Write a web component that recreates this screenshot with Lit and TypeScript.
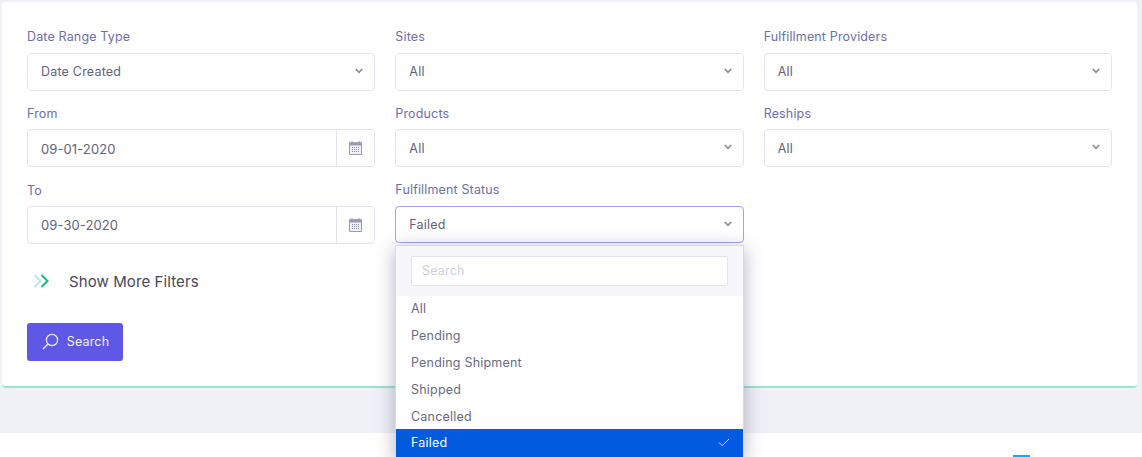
import { LitElement, html, css, svg } from "lit";
import { customElement } from "lit/decorators.js";

const chevron = html`<svg class="chev" width="8" height="6" viewBox="0 0 8 6"><path d="M.8 1 4 4.4 7.2 1" fill="none" stroke="#8a8a9e" stroke-width="1.6"/></svg>`;
const calendar = html`<svg width="13" height="14" viewBox="0 0 13 14">
  <path d="M.5 1.8h12v11.7H.5z" fill="#f1f1f6" stroke="#9b9bb0"/>
  <path d="M0 1.5h13v3H0z" fill="#9b9bb0"/>
  <path d="M3 0v2M10 0v2" stroke="#9b9bb0"/>
  ${[0, 1, 2, 3].flatMap((c) => [0, 1, 2].map((r) => svg`<rect x="${3 + c * 2}" y="${6 + r * 2}" width="1" height="1" fill="#8484a2"/>`))}
</svg>`;

const options = ["All", "Pending", "Pending Shipment", "Shipped", "Cancelled"];

@customElement("app-root")
export class AppRoot extends LitElement {
  static styles = css`
    :host { display: block; height: 457px; overflow: hidden; background: #fff; font-family: Inter, "Noto Sans", sans-serif; position: relative; }
    .band { background: #f0f1f7; height: 433px; padding: 2px 5px 0 2px; box-sizing: border-box; }
    .card { background: #fff; height: 386px; box-sizing: border-box; border-bottom: 2px solid #98e6cb; border-radius: 4px; padding: 27px 25px 0 25px; }
    .grid { display: grid; grid-template-columns: repeat(3, 1fr); column-gap: 20px; }
    .col { display: flex; flex-direction: column; }
    .field { display: flex; flex-direction: column; }
    .label { font-size: 12.5px; line-height: 16px; color: #6d6fa7; height: 16px; margin-bottom: 8px; letter-spacing: 0.15px; white-space: nowrap; }
    .field.r2 { margin-top: 15px; }
    .field.r2 .label { margin-bottom: 7px; }
    .field.r3 { margin-top: 16px; }
    .field.r3 .label { margin-bottom: 7px; }
    .field.r3s { margin-top: 15px; }
    .control { height: 38px; box-sizing: border-box; border: 1px solid #e3e3f1; border-radius: 4px; display: flex; align-items: center; justify-content: space-between; padding: 0 13px 2px; font-size: 12.5px; color: #62627a; letter-spacing: 0.2px; background: #fff; }
    .chev { margin-top: -1px; margin-right: -2px; }
    .r2 .control { padding-bottom: 0; }
    .r2 .chev { margin-top: -3px; }
    .date { padding: 0 0 0 13px; font-size: 13px; letter-spacing: 0.1px; }
    .r2 .date .value { padding-top: 2px; }
    .addon { width: 37px; height: 100%; border-left: 1px solid #e3e3f1; display: flex; align-items: center; justify-content: center; }
    .focus { border-color: #a0a2fa; height: 37px; padding-bottom: 0; }
    .more { display: flex; align-items: center; height: 22px; margin-top: 26px; padding-left: 6px; font-size: 15px; letter-spacing: 0.1px; color: #48465b; }
    .more svg { margin-right: 18px; }
    .btn { margin-top: 31px; width: 96px; height: 38px; border-radius: 3px; background: #5f58e6; color: #f3f3ff; display: flex; align-items: center; justify-content: center; gap: 8px; font-size: 12.5px; letter-spacing: 0.15px; padding-left: 1px; padding-bottom: 1px; box-sizing: border-box; }
    .menu { position: absolute; left: 395px; top: 245px; width: 349px; height: 212px; box-sizing: border-box; background: #fff; border: 1px solid #d9d9e3; border-bottom: none; box-shadow: 0 4px 18px rgba(70, 60, 110, 0.4); font-size: 12.5px; color: #6a6a80; letter-spacing: 0.2px; }
    .search { background: #f6f6fb; height: 50px; padding: 10px 15px 0; box-sizing: border-box; }
    .search div { height: 30px; box-sizing: border-box; border: 1px solid #e3e3f1; background: #fff; border-radius: 2px; padding: 0 10px; line-height: 28px; color: #d0d0da; }
    .opt { height: 27px; line-height: 25px; padding: 0 15px; }
    .sel { margin-top: -2px; background: #025ade; color: #fff; display: flex; align-items: center; justify-content: space-between; height: 28px; padding-right: 13px; padding-bottom: 2px; box-sizing: border-box; }
    .bar { position: absolute; left: 1013px; top: 455px; width: 17px; height: 2px; background: #1aa8f5; }
  `;

  select(label: string, value: string, cls = "", focus = false) {
    return html`<div class="field ${cls}"><div class="label">${label}</div><div class="control ${focus ? "focus" : ""}">${value}${chevron}</div></div>`;
  }
  date(label: string, value: string, cls: string) {
    return html`<div class="field ${cls}"><div class="label">${label}</div><div class="control date"><span class="value">${value}</span><span class="addon">${calendar}</span></div></div>`;
  }

  render() {
    return html`
      <div class="band"><div class="card">
        <div class="grid">
          <div class="col">
            ${this.select("Date Range Type", "Date Created")}
            ${this.date("From", "09-01-2020", "r2")}
            ${this.date("To", "09-30-2020", "r3")}
            <div class="more">
              <svg width="18" height="14" viewBox="0 0 18 14"><path d="M1.5 1 7.5 7 1.5 13" fill="none" stroke="#b5efdb" stroke-width="2"/><path d="M8.5 1 14.5 7 8.5 13" fill="none" stroke="#0bbd85" stroke-width="2"/></svg>
              Show More Filters
            </div>
            <div class="btn">
              <svg width="17" height="17" viewBox="0 0 17 17"><circle cx="10" cy="7" r="5.6" fill="none" stroke="#f3f3ff" stroke-width="1.2"/><path d="M6 11 1 16" stroke="#f3f3ff" stroke-width="1.3"/></svg>
              Search
            </div>
          </div>
          <div class="col">
            ${this.select("Sites", "All")}
            ${this.select("Products", "All", "r2")}
            ${this.select("Fulfillment Status", "Failed", "r3s", true)}
          </div>
          <div class="col">
            ${this.select("Fulfillment Providers", "All")}
            ${this.select("Reships", "All", "r2")}
          </div>
        </div>
      </div></div>
      <div class="menu">
        <div class="search"><div>Search</div></div>
        ${options.map((o) => html`<div class="opt">${o}</div>`)}
        <div class="opt sel">Failed
          <svg width="12" height="9" viewBox="0 0 12 9"><path d="M1 4.5 4.2 7.7 11 1" fill="none" stroke="#cfe0fa" stroke-width="1"/></svg>
        </div>
      </div>
      <div class="bar"></div>
    `;
  }
}
